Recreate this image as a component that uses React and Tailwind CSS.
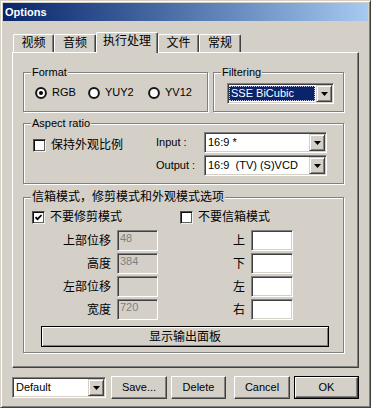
import React from 'react';

const sunken =
  'border border-t-[#808080] border-l-[#808080] border-r-white border-b-white shadow-[inset_1px_1px_0_#404040,inset_-1px_-1px_0_#d4d0c8]';
const boxSunken =
  'border border-t-[#505050] border-l-[#505050] border-r-[#f0f0f0] border-b-[#f0f0f0] shadow-[inset_1px_1px_0_#101010,inset_-1px_-1px_0_#606060]';
const raised =
  'border border-t-white border-l-white border-r-[#404040] border-b-[#404040] shadow-[inset_-1px_-1px_0_#808080]';
const arrowBtn =
  'border border-t-[#d4d0c8] border-l-[#d4d0c8] border-r-[#404040] border-b-[#404040] shadow-[inset_1px_1px_0_#fff,inset_-1px_-1px_0_#808080]';

function Arrow() {
  return (
    <div className={`${arrowBtn} w-[16px] h-[17px] bg-[#d4d0c8] flex items-center justify-center shrink-0`}>
      <svg width="7" height="4" viewBox="0 0 7 4">
        <path d="M0 0h7L3.5 4z" fill="#000" />
      </svg>
    </div>
  );
}

function Combo({ className, value, highlight }) {
  return (
    <div className={`${sunken} ${className} h-[21px] bg-white flex items-center p-[1px]`}>
      <div className="flex-1 h-full flex items-center pr-[1px]">
        {highlight ? (
          <div className="w-full h-[15px] bg-[#0a246a] text-white border border-dotted border-[#c8c8f0] flex items-center pl-[1px] text-[11px] leading-none">
            {value}
          </div>
        ) : (
          <span className="pl-[2px] text-[11px] leading-none whitespace-pre">{value}</span>
        )}
      </div>
      <Arrow />
    </div>
  );
}

function Group({ label, cjk, className, children }) {
  return (
    <div className={`border border-[#808080] shadow-[inset_1px_1px_0_#fff,1px_1px_0_#fff] ${className}`}>
      <div className={`-mt-[7px] ml-[7px] w-fit bg-[#d4d0c8] px-[1px] leading-[13px] ${cjk ? 'text-[12px]' : 'text-[11px]'}`}>
        {label}
      </div>
      {children}
    </div>
  );
}

function Radio({ label, on, className }) {
  return (
    <div className={`flex items-center gap-[5px] ${className}`}>
      <svg width="12" height="12" viewBox="0 0 12 12" className="shrink-0">
        <circle cx="6" cy="6" r="4.9" fill="#fff" stroke="#151515" strokeWidth="2" />
        {on && <circle cx="6" cy="6" r="2" fill="#000" />}
      </svg>
      <span className="text-[11px] leading-none">{label}</span>
    </div>
  );
}

function Check({ label, on, className }) {
  return (
    <div className={`flex items-center gap-[5px] ${className}`}>
      <div className={`${boxSunken} w-[13px] h-[13px] bg-white flex items-center justify-center shrink-0`}>
        {on && (
          <svg width="7" height="7" viewBox="0 0 7 7">
            <path d="M0.5 3.2l2 2 4-4.2" fill="none" stroke="#000" strokeWidth="1.7" />
          </svg>
        )}
      </div>
      <span className="text-[12px] leading-[13px]">{label}</span>
    </div>
  );
}

function Field({ value, disabled, className }) {
  return (
    <div
      className={`${sunken} ${className} h-[21px] ${disabled ? 'bg-[#d4d0c8] text-[#808080]' : 'bg-white'} pl-[2px] pt-[1px] text-[11px] leading-[12px]`}
    >
      {value}
    </div>
  );
}

function Button({ children, className, def }) {
  if (def) {
    return (
      <div className={`border border-black ${className} h-[23px]`}>
        <div className={`${raised} h-full bg-[#d4d0c8] flex items-center justify-center text-[11px]`}>{children}</div>
      </div>
    );
  }
  return (
    <div className={`${raised} ${className} h-[23px] bg-[#d4d0c8] flex items-center justify-center text-[11px]`}>
      {children}
    </div>
  );
}

const tabs = [
  { label: '视频', w: 'w-[41px]' },
  { label: '音频', w: 'w-[42px]' },
  { label: '执行处理', w: 'w-[62px]', on: true },
  { label: '文件', w: 'w-[41px]' },
  { label: '常规', w: 'w-[42px]' },
];

const rows = [
  { left: '上部位移', lv: '48', right: '上' },
  { left: '高度', lv: '384', right: '下' },
  { left: '左部位移', lv: '', right: '左' },
  { left: '宽度', lv: '720', right: '右' },
];

export default function App() {
  return (
    <div className="w-[371px] h-[408px] bg-[#d4d0c8] text-black border border-t-[#d4d0c8] border-l-[#d4d0c8] border-r-[#404040] border-b-[#404040] shadow-[inset_1px_1px_0_#fff,inset_-1px_-1px_0_#808080] p-[2px] flex flex-col overflow-hidden [font-family:'Liberation_Sans','Noto_Sans_CJK_SC',sans-serif]">
      <div className="h-[18px] shrink-0 bg-gradient-to-r from-[#0a246a] to-[#a6caf0] flex items-center pl-[2px] text-white font-bold text-[11px]">
        Options
      </div>

      <div className="mt-[11px] ml-[10px] h-[20px] shrink-0 flex items-start">
        {tabs.map((t) => (
          <div
            key={t.label}
            className={`${t.w} ${t.on ? 'h-[21px] relative z-10' : 'mt-[2px] h-[18px]'} bg-[#d4d0c8] border-t border-l border-r border-t-white border-l-white border-r-[#404040] shadow-[inset_-1px_0_0_#808080] rounded-t-[2px] flex justify-center pt-[2px] text-[12px] leading-[13px]`}
          >
            {t.label}
          </div>
        ))}
      </div>

      <div className="ml-[9px] w-[347px] h-[316px] shrink-0 border border-t-white border-l-white border-r-[#404040] border-b-[#404040] shadow-[inset_-1px_-1px_0_#808080] pl-[10px] pt-[19px]">
        <div className="flex gap-[5px]">
          <Group label="Format" className="w-[185px] h-[40px]">
            <div className="mt-[7px] h-[13px] pl-[11px] flex items-center">
              <Radio label="RGB" on className="w-[53px]" />
              <Radio label="YUY2" className="w-[60px]" />
              <Radio label="YV12" />
            </div>
          </Group>
          <Group label="Filtering" className="w-[131px] h-[40px]">
            <Combo className="mt-[4px] ml-[13px] w-[107px]" value="SSE BiCubic" highlight />
          </Group>
        </div>

        <Group label="Aspect ratio" className="mt-[11px] w-[321px] h-[61px]">
          <div className="mt-[2px] flex">
            <div className="w-[132px] pl-[9px] pt-[7px]">
              <Check label="保持外观比例" />
            </div>
            <div className="flex flex-col gap-[2px]">
              <div className="flex items-center h-[21px]">
                <span className="w-[48px] text-[11px]">Input :</span>
                <Combo className="w-[123px]" value="16:9 *" />
              </div>
              <div className="flex items-center h-[21px]">
                <span className="w-[48px] text-[11px]">Output :</span>
                <Combo className="w-[123px]" value="16:9  (TV) (S)VCD" />
              </div>
            </div>
          </div>
        </Group>

        <Group label="信箱模式，修剪模式和外观模式选项" cjk className="mt-[13px] w-[321px] h-[156px]">
          <div className="mt-[7px] h-[13px] pl-[8px] flex">
            <Check label="不要修剪模式" on className="w-[148px]" />
            <Check label="不要信箱模式" />
          </div>
          <div className="mt-[6px] flex flex-col gap-[2px]">
            {rows.map((r) => (
              <div key={r.left} className="flex items-center h-[21px]">
                <span className="w-[87px] text-right text-[12px]">{r.left}</span>
                <Field className="ml-[6px] w-[41px]" value={r.lv} disabled />
                <span className="w-[87px] text-right text-[12px]">{r.right}</span>
                <Field className="ml-[6px] w-[42px]" />
              </div>
            ))}
          </div>
          <div className="mt-[6px] ml-[17px] w-[288px] h-[21px] border border-black">
            <div className="h-full shadow-[inset_1px_1px_0_#fff,inset_-1px_-1px_0_#808080] flex items-center justify-center text-[12px]">
              显示输出面板
            </div>
          </div>
        </Group>
      </div>

      <div className="mt-[8px] ml-[9px] h-[23px] shrink-0 flex items-center">
        <Combo className="w-[94px]" value="Default" />
        <Button className="ml-[5px] w-[56px]">Save...</Button>
        <Button className="ml-[4px] w-[55px]">Delete</Button>
        <Button className="ml-[8px] w-[56px]">Cancel</Button>
        <Button className="ml-[4px] w-[65px]" def>OK</Button>
      </div>
    </div>
  );
}
